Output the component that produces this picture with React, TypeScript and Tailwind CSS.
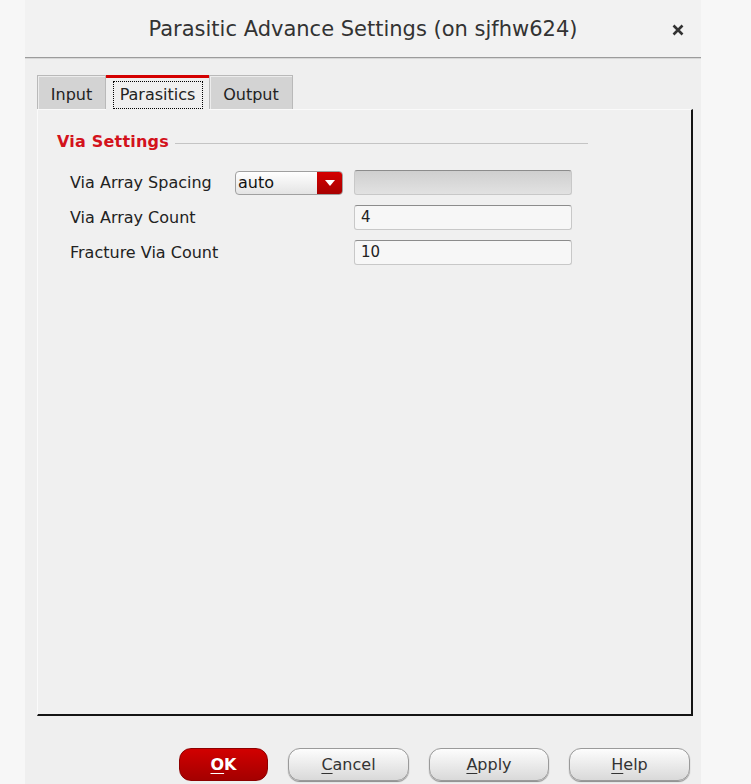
import React from "react";

interface TabProps {
  label: string;
  width: string;
  active?: boolean;
}

function Tab({ label, width, active }: TabProps) {
  if (active) {
    return (
      <div
        className={`${width} h-[35px] -mb-px relative z-10 bg-[#efefef] border-t-[3px] border-[#d40000] flex items-start justify-center pt-[2px]`}
      >
        <div className="mt-[1px] h-[28px] w-[90px] border border-dotted border-black flex items-center justify-center text-[16px] text-[#222]">
          {label}
        </div>
      </div>
    );
  }
  return (
    <div
      className={`${width} h-[34px] bg-[#d3d3d3] border border-[#b9b9b9] border-b-0 shadow-[inset_1px_1px_0_#ececec] flex items-center justify-center pt-[5px] text-[16px] text-[#222]`}
    >
      {label}
    </div>
  );
}

interface FieldProps {
  value?: string;
  disabled?: boolean;
}

function Field({ value, disabled }: FieldProps) {
  return (
    <div
      className={`w-[218px] h-[25px] rounded-[3px] border border-[#c8c8c8] border-t-[#8c8c8c] flex items-center px-[6px] text-[15px] text-[#222] ${
        disabled ? "bg-gradient-to-b from-[#cfcfcf] to-[#e2e2e2]" : "bg-[#f7f7f7]"
      }`}
    >
      {value}
    </div>
  );
}

interface BtnProps {
  mnemonic: string;
  rest: string;
  width: string;
  primary?: boolean;
}

function DialogButton({ mnemonic, rest, width, primary }: BtnProps) {
  return (
    <button
      className={`${width} h-[33px] rounded-[12px] border flex items-center justify-center text-[16px] ${
        primary
          ? "bg-gradient-to-b from-[#d20000] to-[#a40000] border-[#8e0000] text-white font-bold"
          : "bg-gradient-to-b from-[#fdfdfd] to-[#d9d9d9] border-[#9a9a9a] text-[#333] shadow-[0_1px_1px_#8a8a8a]"
      }`}
    >
      <span className="underline underline-offset-[3px]">{mnemonic}</span>
      {rest}
    </button>
  );
}

export default function App() {
  return (
    <div className="w-[751px] h-[784px] bg-[#f7f7f7] flex font-['DejaVu_Sans',sans-serif] overflow-hidden">
      <div className="ml-[25px] w-[676px] h-full bg-[#efefef] flex flex-col">
        {/* title bar */}
        <header className="h-[57px] bg-[#f2f2f2] flex items-center relative">
          <h1 className="w-full text-center text-[21px] text-[#333] pt-[2px]">
            Parasitic Advance Settings (on sjfhw624)
          </h1>
          <svg
            className="absolute right-[17px] top-[24px]"
            width="12"
            height="12"
            viewBox="0 0 12 12"
          >
            <path d="M1.5 1.5 L10.5 10.5 M10.5 1.5 L1.5 10.5" stroke="#333" strokeWidth="2.6" />
          </svg>
        </header>
        <div className="h-px bg-[#9c9c9c]" />
        <div className="h-px bg-[#d8d8d8]" />

        <div className="pl-[12px] pr-[8px] pt-[16px] flex flex-col">
          <div className="flex items-end">
            <Tab label="Input" width="w-[69px]" />
            <Tab label="Parasitics" width="w-[103px]" active />
            <Tab label="Output" width="w-[84px]" />
          </div>

          <section className="h-[607px] bg-[#f0f0f0] border-l border-t border-[#fafafa] border-r-2 border-b-2 border-r-[#141414] border-b-[#141414] pl-[19px] pt-[20px]">
            <div className="flex items-center w-[531px]">
              <span className="text-[16px] font-bold text-[#d3121c] tracking-[0.2px]">Via Settings</span>
              <div className="flex-1 h-px bg-[#c4c4c4] ml-[6px] mt-[2px]" />
            </div>

            <div className="pl-[13px] mt-[16px] flex flex-col gap-[10px] text-[16px] text-[#222]">
              <div className="flex items-center h-[25px]">
                <span className="w-[165px]">Via Array Spacing</span>
                <div className="w-[108px] h-[24px] rounded-[4px] border border-[#a0a0a0] bg-gradient-to-b from-[#ffffff] to-[#e4e4e4] flex items-center overflow-hidden">
                  <span className="flex-1 pl-[2px] text-[16px] text-[#111]">auto</span>
                  <div className="w-[25px] h-full bg-gradient-to-b from-[#d40000] to-[#a80000] flex items-center justify-center">
                    <svg width="10" height="6" viewBox="0 0 10 6">
                      <path d="M0 0 H10 L5 6 Z" fill="#fff" />
                    </svg>
                  </div>
                </div>
                <div className="ml-[11px]">
                  <Field disabled />
                </div>
              </div>
              <div className="flex items-center h-[25px]">
                <span className="w-[284px]">Via Array Count</span>
                <Field value="4" />
              </div>
              <div className="flex items-center h-[25px]">
                <span className="w-[284px]">Fracture Via Count</span>
                <Field value="10" />
              </div>
            </div>
          </section>

          <div className="mt-[32px] flex justify-end gap-[20px] pr-[3px]">
            <DialogButton mnemonic="O" rest="K" width="w-[89px]" primary />
            <DialogButton mnemonic="C" rest="ancel" width="w-[121px]" />
            <DialogButton mnemonic="A" rest="pply" width="w-[120px]" />
            <DialogButton mnemonic="H" rest="elp" width="w-[121px]" />
          </div>
        </div>
      </div>
    </div>
  );
}
